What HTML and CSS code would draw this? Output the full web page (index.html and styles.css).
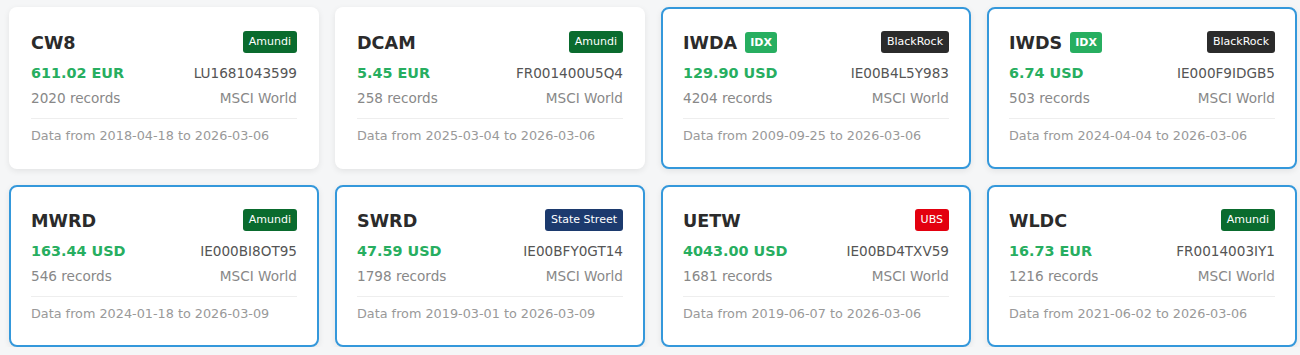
FILE: index.html
```html
<!DOCTYPE html>
<html>
<head>
    <meta charset="utf-8">
    <title>ETF Overview</title>
    <link rel="stylesheet" href="styles.css">
</head>
<body>
    <div class="etf-grid">
        <div class="etf-card">
            <div class="card-head">
                <span class="ticker">CW8</span>
                <span class="issuer issuer-amundi">Amundi</span>
            </div>
            <div class="card-row">
                <span class="price">611.02 EUR</span>
                <span class="isin">LU1681043599</span>
            </div>
            <div class="card-row muted">
                <span>2020 records</span>
                <span>MSCI World</span>
            </div>
            <div class="card-foot">Data from 2018-04-18 to 2026-03-06</div>
        </div>

        <div class="etf-card">
            <div class="card-head">
                <span class="ticker">DCAM</span>
                <span class="issuer issuer-amundi">Amundi</span>
            </div>
            <div class="card-row">
                <span class="price">5.45 EUR</span>
                <span class="isin">FR001400U5Q4</span>
            </div>
            <div class="card-row muted">
                <span>258 records</span>
                <span>MSCI World</span>
            </div>
            <div class="card-foot">Data from 2025-03-04 to 2026-03-06</div>
        </div>

        <div class="etf-card selected">
            <div class="card-head">
                <span class="ticker">IWDA <span class="idx">IDX</span></span>
                <span class="issuer issuer-blackrock">BlackRock</span>
            </div>
            <div class="card-row">
                <span class="price">129.90 USD</span>
                <span class="isin">IE00B4L5Y983</span>
            </div>
            <div class="card-row muted">
                <span>4204 records</span>
                <span>MSCI World</span>
            </div>
            <div class="card-foot">Data from 2009-09-25 to 2026-03-06</div>
        </div>

        <div class="etf-card selected">
            <div class="card-head">
                <span class="ticker">IWDS <span class="idx">IDX</span></span>
                <span class="issuer issuer-blackrock">BlackRock</span>
            </div>
            <div class="card-row">
                <span class="price">6.74 USD</span>
                <span class="isin">IE000F9IDGB5</span>
            </div>
            <div class="card-row muted">
                <span>503 records</span>
                <span>MSCI World</span>
            </div>
            <div class="card-foot">Data from 2024-04-04 to 2026-03-06</div>
        </div>

        <div class="etf-card selected">
            <div class="card-head">
                <span class="ticker">MWRD</span>
                <span class="issuer issuer-amundi">Amundi</span>
            </div>
            <div class="card-row">
                <span class="price">163.44 USD</span>
                <span class="isin">IE000BI8OT95</span>
            </div>
            <div class="card-row muted">
                <span>546 records</span>
                <span>MSCI World</span>
            </div>
            <div class="card-foot">Data from 2024-01-18 to 2026-03-09</div>
        </div>

        <div class="etf-card selected">
            <div class="card-head">
                <span class="ticker">SWRD</span>
                <span class="issuer issuer-statestreet">State Street</span>
            </div>
            <div class="card-row">
                <span class="price">47.59 USD</span>
                <span class="isin">IE00BFY0GT14</span>
            </div>
            <div class="card-row muted">
                <span>1798 records</span>
                <span>MSCI World</span>
            </div>
            <div class="card-foot">Data from 2019-03-01 to 2026-03-09</div>
        </div>

        <div class="etf-card selected">
            <div class="card-head">
                <span class="ticker">UETW</span>
                <span class="issuer issuer-ubs">UBS</span>
            </div>
            <div class="card-row">
                <span class="price">4043.00 USD</span>
                <span class="isin">IE00BD4TXV59</span>
            </div>
            <div class="card-row muted">
                <span>1681 records</span>
                <span>MSCI World</span>
            </div>
            <div class="card-foot">Data from 2019-06-07 to 2026-03-06</div>
        </div>

        <div class="etf-card selected">
            <div class="card-head">
                <span class="ticker">WLDC</span>
                <span class="issuer issuer-amundi">Amundi</span>
            </div>
            <div class="card-row">
                <span class="price">16.73 EUR</span>
                <span class="isin">FR0014003IY1</span>
            </div>
            <div class="card-row muted">
                <span>1216 records</span>
                <span>MSCI World</span>
            </div>
            <div class="card-foot">Data from 2021-06-02 to 2026-03-06</div>
        </div>
    </div>
</body>
</html>
```

FILE: styles.css
```css
body {
    margin: 0;
    padding: 7px 0 0 9px;
    font-family: "DejaVu Sans", sans-serif;
    background: #f5f6f7;
    color: #333;
}

.etf-grid {
    display: grid;
    grid-template-columns: repeat(4, 310px);
    gap: 16px;
}

.etf-card {
    background: white;
    border: 2px solid transparent;
    border-radius: 8px;
    box-shadow: 0 2px 6px rgba(0,0,0,0.08);
    padding: 20px;
}

.etf-card.selected {
    border-color: #3498db;
}

.card-head {
    display: flex;
    justify-content: space-between;
    align-items: center;
    height: 26px;
}

.ticker {
    font-size: 17.6px;
    font-weight: bold;
    color: #2b2b2b;
    display: flex;
    align-items: center;
    gap: 8px;
    position: relative;
    top: 1px;
}

.idx {
    background: #27ae60;
    color: white;
    font-size: 11px;
    line-height: 14px;
    font-weight: bold;
    padding: 4px 5px 3px;
    border-radius: 3px;
    position: relative;
    top: -1px;
}

.issuer {
    color: white;
    font-size: 11px;
    line-height: 14px;
    padding: 4px 6px;
    border-radius: 3px;
}

.issuer-amundi { background: #0a6b2e; }
.issuer-blackrock { background: #2b2b2b; }
.issuer-statestreet { background: #1c3a6e; }
.issuer-ubs { background: #e3000f; }

.card-row {
    display: flex;
    justify-content: space-between;
    font-size: 13.6px;
    line-height: 22px;
    margin-top: 7px;
    color: #555;
}

.card-row.muted {
    line-height: 20px;
    margin-top: 4px;
    color: #888;
}

.price {
    font-size: 14.4px;
    font-weight: bold;
    color: #27ae60;
}

.card-foot {
    border-top: 1px solid #eee;
    margin-top: 10px;
    padding-top: 6px;
    font-size: 12.8px;
    line-height: 22px;
    color: #999;
}
```
